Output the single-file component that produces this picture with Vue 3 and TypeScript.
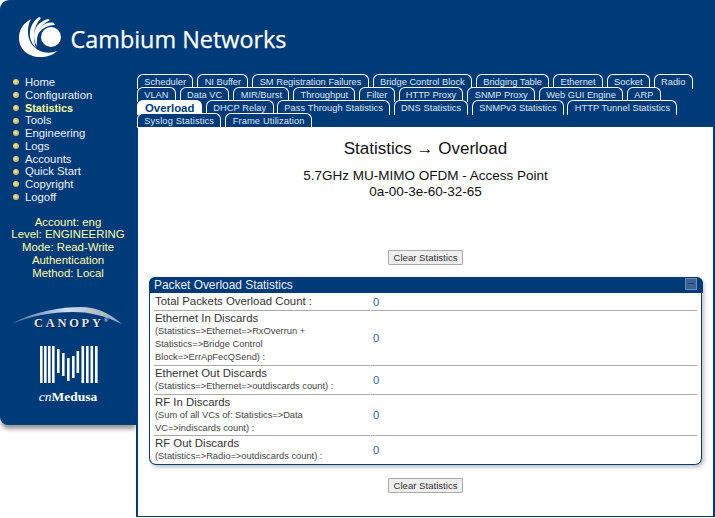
<script setup lang="ts">
const nav = ['Home','Configuration','Statistics','Tools','Engineering','Logs','Accounts','Quick Start','Copyright','Logoff']
const tabRows: string[][] = [
  ['Scheduler','NI Buffer','SM Registration Failures','Bridge Control Block','Bridging Table','Ethernet','Socket','Radio'],
  ['VLAN','Data VC','MIR/Burst','Throughput','Filter','HTTP Proxy','SNMP Proxy','Web GUI Engine','ARP'],
  ['Overload','DHCP Relay','Pass Through Statistics','DNS Statistics','SNMPv3 Statistics','HTTP Tunnel Statistics'],
  ['Syslog Statistics','Frame Utilization'],
]
const rows = [
  { label: 'Total Packets Overload Count :', sub: '' },
  { label: 'Ethernet In Discards', sub: '(Statistics=>Ethernet=>RxOverrun + Statistics=>Bridge Control Block=>ErrApFecQSend) :' },
  { label: 'Ethernet Out Discards', sub: '(Statistics=>Ethernet=>outdiscards count) :' },
  { label: 'RF In Discards', sub: '(Sum of all VCs of: Statistics=>Data VC=>indiscards count) :' },
  { label: 'RF Out Discards', sub: '(Statistics=>Radio=>outdiscards count) :' },
]
const bars = [
  { x: 0, y: 0, h: 37 }, { x: 4, y: 0, h: 37 }, { x: 8, y: 0, h: 37 }, { x: 12, y: 0, h: 37 },
  { x: 17, y: 3, h: 24 }, { x: 22, y: 7, h: 23 }, { x: 27, y: 12, h: 23 }, { x: 32, y: 10, h: 22 }, { x: 36.5, y: 5, h: 22 },
  { x: 41.5, y: 0, h: 37 }, { x: 46, y: 0, h: 37 }, { x: 50.5, y: 0, h: 37 }, { x: 55, y: 0, h: 37 },
]
</script>

<template>
  <div class="page">
    <header class="top">
      <svg class="swirl" width="42" height="41" viewBox="0 0 42 41">
        <circle cx="32" cy="21" r="10" fill="#fff"/>
        <path d="M12 3 C3 8 0 15 0 22 C0 33 9 41 21 41 C28 41 34 39 38 35 C30 38 21 37 15 31 C8 24 7 12 12 3Z" fill="#fff"/>
        <path d="M20 1 C13 6 10 13 11 21 C12 26 14 29 17 32 C14 24 13 12 22 2Z" fill="#fff"/>
        <path d="M29 3 C20 5 15 12 15 20 C15 24 16 27 18 30 C17 20 20 9 31 4Z" fill="#fff"/>
        <path d="M35 7 C27 5 19 11 18 21 C20 14 27 9 36 9Z" fill="#fff"/>
      </svg>
      <span class="brand">Cambium Networks</span>
    </header>
    <div class="body">
      <aside class="side">
        <ul class="nav">
          <li v-for="n in nav" :key="n" :class="{ on: n === 'Statistics' }"><i class="dot"></i>{{ n }}</li>
        </ul>
        <div class="acct">
          <div>Account: eng</div>
          <div>Level: ENGINEERING</div>
          <div>Mode: Read-Write</div>
          <div>Authentication</div>
          <div>Method: Local</div>
        </div>
        <div class="canopy">
          <svg width="114" height="20" viewBox="0 0 114 20" class="arc">
            <defs>
              <linearGradient id="arcg" x1="0" x2="1" y1="0" y2="0">
                <stop offset="0" stop-color="#3f6ba3"/>
                <stop offset="0.5" stop-color="#cfdcee"/>
                <stop offset="1" stop-color="#8ea5c4"/>
              </linearGradient>
            </defs>
            <path d="M0 17 C24 4 50 0 70 0 C86 0 100 7 111 17 C92 8 78 5 62 5 C40 5 20 9 0 17Z" fill="url(#arcg)"/>
            <circle cx="80" cy="4" r="1.4" fill="#e8c850"/><circle cx="91" cy="7" r="1.3" fill="#e8c850"/>
          </svg>
          <span class="canopy-t">CANOPY<sup>®</sup></span>
        </div>
        <svg class="medusa" width="58" height="37" viewBox="0 0 58 37">
          <rect v-for="(b,i) in bars" :key="i" :x="b.x" :y="b.y" width="2.6" :height="b.h" fill="#fff"/>
        </svg>
        <div class="medusa-t"><em>cn</em><b>Medusa</b></div>
      </aside>
      <main class="main">
        <nav class="tabs">
          <div v-for="(r,i) in tabRows" :key="i" class="tabrow">
            <span v-for="t in r" :key="t" class="tab" :class="{ act: t === 'Overload' }">{{ t }}</span>
          </div>
        </nav>
        <section class="content">
          <h1>Statistics → Overload</h1>
          <p class="dev">5.7GHz MU-MIMO OFDM - Access Point<br>0a-00-3e-60-32-65</p>
          <button class="btn first">Clear Statistics</button>
          <div class="panel">
            <div class="ptitle">Packet Overload Statistics<span class="min"></span></div>
            <div v-for="r in rows" :key="r.label" class="row">
              <div class="lab">{{ r.label }}<small v-if="r.sub">{{ r.sub }}</small></div>
              <div class="val">0</div>
            </div>
          </div>
          <button class="btn">Clear Statistics</button>
        </section>
      </main>
    </div>
  </div>
</template>

<style>
html, body { margin: 0; background: #fff; }
</style>

<style scoped>
.page { width: 715px; height: 518px; overflow: hidden; font-family: "Liberation Sans", Arial, sans-serif; background: #fff; position: relative; }
.top { height: 68px; background: #003b79; border-top-left-radius: 9px; display: flex; align-items: flex-start; padding: 16px 0 0 19px; box-sizing: border-box; }
.swirl { flex: none; }
.brand { color: #fff; font-family: "Open Sans", sans-serif; font-size: 23.4px; margin: 7px 0 0 9.5px; -webkit-text-stroke: 0.25px #fff; }
.body { display: flex; height: 450px; }
.side { width: 136px; height: 357px; background: #003b79; border-bottom-left-radius: 8px; box-shadow: 0 5px 4px -1px #999; color: #fff; flex: none; display: flex; flex-direction: column; align-items: center; }
.nav { list-style: none; margin: 8px 0 0; padding: 0 0 0 13px; align-self: stretch; font-size: 11.3px; color: #eef1f6; }
.nav li { display: flex; align-items: center; height: 12.75px; line-height: 12.75px; }
.nav .on { color: #ffff99; font-weight: bold; font-size: 10.8px; }
.dot { width: 6px; height: 6px; border-radius: 50%; background: radial-gradient(circle at 40% 40%, #f2e49a, #b39a3c); margin-right: 6px; flex: none; }
.acct { margin-top: 12px; font-size: 11.4px; line-height: 12.75px; text-align: center; color: #ffffa6; width: 133px; }
.canopy { position: relative; margin-top: 28px; height: 33px; width: 112px; flex: none; }
.arc { display: block; margin-left: -1px; }
.canopy-t { position: absolute; left: 22px; top: 9px; white-space: nowrap; font-family: "Liberation Serif", serif; font-weight: bold; font-size: 12.5px; line-height: 14px; letter-spacing: 2.7px; color: #dfe5ee; text-shadow: 1px 1px 1px #00173a; }
.canopy-t sup { font-size: 6px; letter-spacing: 0; line-height: 0; }
.medusa { margin-top: 6px; flex: none; margin-left: 1px; }
.medusa-t { font-family: "Liberation Serif", serif; font-size: 13.5px; line-height: 14px; color: #fff; margin-top: 7px; }
.medusa-t em { font-weight: normal; }
.main { flex: 1; margin-bottom: 1px; display: flex; flex-direction: column; background: #003b79; border: solid #003b79; border-width: 0 2px 1.5px 2px; box-sizing: border-box; min-width: 0; }
.tabs { padding-top: 6px; height: 59px; box-sizing: border-box; margin-left: -1px; }
.tabrow { display: flex; gap: 4px; height: 13px; }
.tabrow:nth-child(3) { letter-spacing: 0.05px; gap: 3.6px; }
.tabrow:nth-child(4) { letter-spacing: 0.13px; }
.tab { height: 14px; line-height: 14px; font-size: 9.3px; padding: 0 6.25px; color: #dfe6ef; background: #003b79; border: solid #fff; border-width: 1.5px 1.5px 0; border-radius: 6px 6px 0 0; white-space: nowrap; }
.tab.act { background: #fff; color: #003b79; font-weight: bold; font-size: 11.4px; padding: 0 7px; letter-spacing: 0; }
.content { flex: 1; background: #fff; display: flex; flex-direction: column; align-items: center; padding-top: 12px; }
h1 { margin: 0; font-size: 17px; line-height: 20px; font-weight: normal; color: #111; }
.dev { margin: 9px 0 0; font-size: 13.5px; line-height: 16px; text-align: center; color: #111; }
.btn { margin-top: 12.5px; width: 75px; height: 15px; padding: 0; font-family: inherit; font-size: 9.6px; color: #333; background: #eee; border: 1px solid #aaa; border-radius: 1px; }
.btn.first { margin-top: 50px; }
.panel { width: 553px; margin-top: 12px; box-sizing: border-box; border: solid #003b79; border-width: 0 1.5px 1.5px; border-radius: 7px; box-shadow: 2px 2px 4px #bbb; }
.ptitle { background: #003b79; color: #eef1f6; height: 16px; line-height: 16px; font-size: 11.9px; padding-left: 5.5px; border-radius: 6px 6px 0 0; margin: 0 -1.5px; position: relative; }
.min { position: absolute; right: 6px; top: 1px; width: 10px; height: 10px; background: #3c6296; border: 1px solid #6e8bb2; }
.min::after { content: ""; position: absolute; left: 2px; right: 2px; top: 4px; height: 1px; background: #1d3f70; }
.row { display: flex; padding: 0 4px; align-items: stretch; }
.row:not(:last-child) .lab, .row:not(:last-child) .val { border-bottom: 1px solid #aaa; }
.row:nth-child(5) small { line-height: 12.5px; }
.lab { width: 216px; min-height: 18px; flex: none; box-sizing: border-box; padding: 0 0 1px 1px; font-size: 11.4px; line-height: 14px; color: #333; margin-right: 1px; display: flex; flex-direction: column; justify-content: center; }
.lab small { display: block; max-width: 195px; font-size: 9.3px; line-height: 13px; color: #444; }
.val { flex: 1; display: flex; align-items: center; font-size: 11.3px; color: #2f6aa3; padding-left: 2px; }
</style>
